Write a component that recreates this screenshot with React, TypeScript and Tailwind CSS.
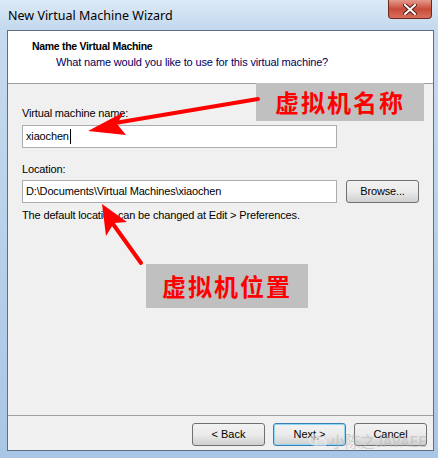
import React from "react";

const UI = { fontFamily: '"Liberation Sans", Arial, sans-serif' };
const CAPTION = { fontFamily: '"Noto Sans", sans-serif' };
const CJK = { fontFamily: '"Noto Sans CJK SC", sans-serif' };

const WinButton = ({ label, focused }: { label: string; focused?: boolean }) => (
  <button
    className={
      "h-[23px] w-[73px] rounded-[3px] border text-[11px] text-black bg-gradient-to-b from-[#f2f2f2] via-[#ebebeb] to-[#cfcfcf] " +
      (focused ? "border-[#3c7fb1] shadow-[inset_0_0_0_1px_#8fd7f5]" : "border-[#707070]")
    }
  >
    {label}
  </button>
);

const TextBox = ({ value, caret }: { value: string; caret?: boolean }) => (
  <div className="h-[23px] w-[315px] border border-[#abadb3] bg-white flex items-center px-[3px] text-[11px] tracking-[-0.15px] text-black">
    <span>{value}</span>
    {caret && <span className="ml-[1px] inline-block h-[15px] w-[1px] bg-black"></span>}
  </div>
);

export default function App() {
  return (
    <div style={UI} className="relative h-[458px] w-[438px] overflow-hidden bg-gradient-to-b from-[#c9dcf0] via-[#b9d1ea] to-[#a9c6e6]">
      {/* title bar */}
      <div className="flex h-[30px] items-start bg-gradient-to-b from-[#dce9f6] to-[#c3d8ee]">
        <span style={CAPTION} className="ml-[8px] mt-[7px] text-[12.5px] text-black">New Virtual Machine Wizard</span>
        <div className="ml-auto mr-[6px] flex h-[19px] w-[44px] items-center justify-center rounded-b-[4px] border border-t-0 border-[#6b2a22] bg-gradient-to-b from-[#e39a8c] via-[#c84a3a] to-[#d9705c]">
          <svg width="14" height="11" viewBox="0 0 14 11">
            <path d="M2 1 L12 10 M12 1 L2 10" stroke="#5a1e18" strokeWidth="4" strokeLinecap="square" />
            <path d="M2 1 L12 10 M12 1 L2 10" stroke="#ffffff" strokeWidth="2" strokeLinecap="square" />
          </svg>
        </div>
      </div>

      {/* client area */}
      <div className="ml-[7px] flex h-[421px] w-[427px] flex-col border border-[#5d6f86] bg-[#f0f0f0]">
        <div className="h-[52px] bg-white pl-[24px] pt-[7px]">
          <div className="text-[10.5px] font-bold leading-[16px] tracking-[-0.3px] text-black">Name the Virtual Machine</div>
          <div className="pl-[24px] text-[11px] leading-[16px] tracking-[-0.15px] text-[#000060]">
            What name would you like to use for this virtual machine?
          </div>
        </div>
        <div className="h-[1px] bg-[#a0a0a0]"></div>

        <div className="flex flex-1 flex-col pl-[14px] pt-[21px] text-[11px] tracking-[-0.15px] text-black">
          <div className="leading-[16px]">Virtual machine name:</div>
          <div className="mt-[4px]">
            <TextBox value="xiaochen" caret />
          </div>
          <div className="mt-[13px] leading-[16px]">Location:</div>
          <div className="mt-[3px] flex items-center gap-[9px]">
            <TextBox value="D:\Documents\Virtual Machines\xiaochen" />
            <WinButton label="Browse..." />
          </div>
          <div className="mt-[4px] leading-[16px]">The default location can be changed at Edit &gt; Preferences.</div>
        </div>

        <div className="h-[1px] bg-[#a0a0a0]"></div>
        <div className="flex h-[34px] items-start justify-end gap-[8px] pr-[6px] pt-[7px]">
          <WinButton label="< Back" />
          <WinButton label="Next >" focused />
          <WinButton label="Cancel" />
        </div>
      </div>

      {/* annotation labels */}
      <div
        style={CJK}
        className="absolute left-[256px] top-[83px] flex h-[38px] w-[168px] items-center justify-center bg-[#c0c0c0] text-[24px] font-bold tracking-[2px] text-[#ff0000]"
      >
        虚拟机名称
      </div>
      <div
        style={CJK}
        className="absolute left-[146px] top-[264px] flex h-[44px] w-[162px] items-center justify-center bg-[#c0c0c0] text-[24px] font-bold tracking-[2px] text-[#ff0000]"
      >
        虚拟机位置
      </div>

      {/* annotation arrows */}
      <svg className="pointer-events-none absolute left-0 top-0" width="438" height="458" viewBox="0 0 438 458">
        <path d="M258 99 L115 123" stroke="#ff0000" strokeWidth="4" strokeLinecap="round" />
        <path d="M88 131 L124 112 L117 124 L126 135 Z" fill="#ff0000" />
        <path d="M141 263 L113 224" stroke="#ff0000" strokeWidth="4" strokeLinecap="round" />
        <path d="M102 204 L127 222 L114 223 L106 236 Z" fill="#ff0000" />
      </svg>

      {/* watermark */}
      <div className="pointer-events-none absolute left-[309px] top-[430px] flex items-center gap-[3px] opacity-60">
        <svg width="18" height="16" viewBox="0 0 18 16">
          <ellipse cx="7" cy="7" rx="6.5" ry="5.5" fill="#d8d8d8" stroke="#ffffff" strokeWidth="1" />
          <ellipse cx="12" cy="10" rx="5.5" ry="4.5" fill="#e8e8e8" stroke="#ffffff" strokeWidth="1" />
          <circle cx="5" cy="6" r="0.9" fill="#888" />
          <circle cx="9" cy="6" r="0.9" fill="#888" />
        </svg>
        <span style={CJK} className="text-[15px] text-[#b8b8b8]">小陈之JAVAEE</span>
      </div>
    </div>
  );
}
